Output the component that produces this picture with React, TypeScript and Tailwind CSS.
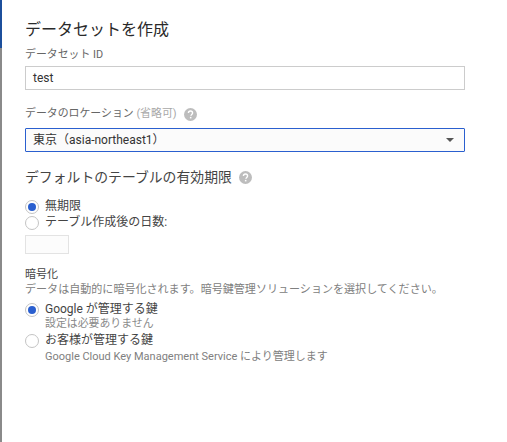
import type { ReactNode } from 'react'

const font = { fontFamily: '"Roboto", "Noto Sans CJK JP", sans-serif' }

function HelpIcon() {
  return (
    <svg width="13" height="13" viewBox="0 0 24 24" className="shrink-0">
      <circle cx="12" cy="12" r="12" fill="#bdbdbd" />
      <path d="M8.2 9.4a3.8 3.8 0 0 1 7.6 0c0 2.6-3 2.7-3 5.1" fill="none" stroke="#fff" strokeWidth="2.6" />
      <rect x="10.9" y="16.4" width="2.8" height="2.8" fill="#fff" />
    </svg>
  )
}

function Radio({ checked, children }: { checked?: boolean; children: ReactNode }) {
  return (
    <div className="flex items-center h-[17px] gap-[6px]">
      <span className="w-[14px] h-[14px] rounded-full border border-[#c4c4c4] bg-white flex items-center justify-center shrink-0">
        {checked && <span className="w-[8px] h-[8px] rounded-full bg-[#2a5fcf]" />}
      </span>
      <span className="text-[12px] leading-[17px] text-[#444444]">{children}</span>
    </div>
  )
}

export default function App() {
  return (
    <div style={font} className="w-[507px] h-[442px] bg-white overflow-hidden flex">
      <div className="w-[2px] h-full flex flex-col shrink-0">
        <div className="h-[48px] bg-[#1c4f9c]" />
        <div className="flex-1 bg-[#8a8a8a]" />
      </div>
      <div className="pl-[23px] pt-[20px] flex-1">
        <h1 className="text-[16px] leading-[20px] text-[#2a2a2a]">データセットを作成</h1>

        <label className="block mt-[7px] text-[10.9px] leading-[16px] text-[#666666]">データセット ID</label>
        <div className="mt-[3px] w-[440px] h-[24px] border border-[#cccccc] px-[7px] flex items-center text-[12px] text-[#333333]">
          test
        </div>

        <div className="mt-[16px] flex items-center gap-[7px] h-[16px]">
          <span className="text-[10.9px] text-[#666666]">
            データのロケーション <span className="text-[#a8a8a8]">(省略可)</span>
          </span>
          <HelpIcon />
        </div>
        <div className="mt-[6px] w-[440px] h-[24px] border border-[#2a5fcf] rounded-[1px] bg-[#fbfbfb] px-[7px] flex items-center justify-between text-[12px] text-[#333333]">
          <span>東京（asia-northeast1）</span>
          <span className="w-0 h-0 border-x-[4px] border-x-transparent border-t-[4px] border-t-[#555555] mr-[3px]" />
        </div>

        <div className="mt-[15px] flex items-center gap-[7px] h-[20px]">
          <h2 className="text-[13.85px] text-[#444444] font-normal">デフォルトのテーブルの有効期限</h2>
          <HelpIcon />
        </div>

        <div className="mt-[11px]">
          <Radio checked>無期限</Radio>
          <div className="-mt-[1px]">
            <Radio>テーブル作成後の日数:</Radio>
          </div>
        </div>
        <div className="mt-[4px] w-[44px] h-[19px] border border-[#e3e3e3] bg-[#fcfcfc]" />

        <div className="mt-[14px] text-[11px] leading-[14px] text-[#444444]">暗号化</div>
        <p className="text-[11.05px] leading-[15px] text-[#808080] whitespace-nowrap">
          データは自動的に暗号化されます。暗号鍵管理ソリューションを選択してください。
        </p>

        <div className="mt-[4px]">
          <Radio checked>Google が管理する鍵</Radio>
          <div className="pl-[20px] -mt-[1px] text-[10.9px] leading-[14px] text-[#8a8a8a]">設定は必要ありません</div>
        </div>
        <div className="mt-[1px]">
          <Radio>お客様が管理する鍵</Radio>
          <div className="pl-[20px] mt-[1px] text-[11px] leading-[14px] text-[#808080] whitespace-nowrap">
            Google Cloud Key Management Service により管理します
          </div>
        </div>
      </div>
    </div>
  )
}
